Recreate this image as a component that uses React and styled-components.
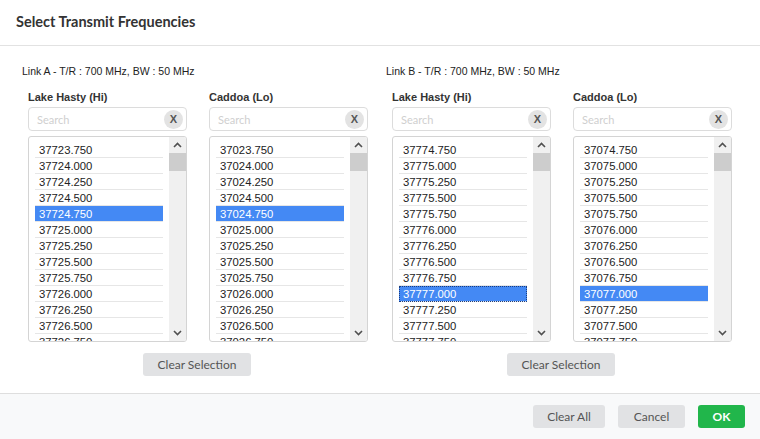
import React from 'react'
import styled, { createGlobalStyle } from 'styled-components'

const GlobalStyle = createGlobalStyle`
  html, body { margin: 0; padding: 0; background: #fff; }
  * { box-sizing: border-box; }
`

const makeList = (start, count) => {
  const out = []
  for (let i = 0; i < count; i++) out.push((start + i * 0.25).toFixed(3))
  return out
}

const links = [
  {
    label: 'Link A - T/R : 700 MHz, BW : 50 MHz',
    cols: [
      { title: 'Lake Hasty (Hi)', items: makeList(37723.75, 13), selected: 4 },
      { title: 'Caddoa (Lo)', items: makeList(37023.75, 13), selected: 4 },
    ],
  },
  {
    label: 'Link B - T/R : 700 MHz, BW : 50 MHz',
    cols: [
      { title: 'Lake Hasty (Hi)', items: makeList(37774.75, 13), selected: 9, focused: true },
      { title: 'Caddoa (Lo)', items: makeList(37074.75, 13), selected: 9 },
    ],
  },
]

function Chevron({ up }) {
  return (
    <svg width="9" height="6" viewBox="0 0 9 6">
      <polyline
        points={up ? '1,5 4.5,1.5 8,5' : '1,1 4.5,4.5 8,1'}
        fill="none"
        stroke="#505050"
        strokeWidth="1.6"
      />
    </svg>
  )
}

function FreqColumn({ col }) {
  return (
    <Column>
      <ColTitle>{col.title}</ColTitle>
      <SearchBox>
        <SearchInput placeholder="Search" />
        <ClearX>X</ClearX>
      </SearchBox>
      <ListBox>
        <Rows>
          {col.items.map((v, i) => (
            <Row key={v} $selected={i === col.selected} $focused={i === col.selected && col.focused}>
              {v}
            </Row>
          ))}
        </Rows>
        <ScrollBar>
          <Arrow><Chevron up /></Arrow>
          <Thumb />
          <Track />
          <Arrow><Chevron /></Arrow>
        </ScrollBar>
      </ListBox>
    </Column>
  )
}

export default function App() {
  return (
    <Dialog>
      <GlobalStyle />
      <Header>Select Transmit Frequencies</Header>
      <Body>
        {links.map((link) => (
          <LinkGroup key={link.label}>
            <LinkLabel>{link.label}</LinkLabel>
            <Columns>
              {link.cols.map((c) => (
                <FreqColumn key={c.title} col={c} />
              ))}
            </Columns>
            <GreyButton $w={108}>Clear Selection</GreyButton>
          </LinkGroup>
        ))}
      </Body>
      <Footer>
        <GreyButton $w={72}>Clear All</GreyButton>
        <GreyButton $w={67}>Cancel</GreyButton>
        <OkButton>OK</OkButton>
      </Footer>
    </Dialog>
  )
}

const Dialog = styled.div`
  width: 760px;
  height: 439px;
  background: #fff;
  display: flex;
  flex-direction: column;
  overflow: hidden;
`
const Header = styled.div`
  height: 46px;
  border-bottom: 1px solid #e2e2e2;
  padding: 0 16px;
  display: flex;
  align-items: center;
  padding-bottom: 2px;
  font-family: Lato, 'Open Sans', sans-serif;
  font-weight: 700;
  font-size: 14.5px;
  color: #333;
`
const Body = styled.div`
  flex: 1;
  display: flex;
  padding: 18px 0 0 22px;
`
const LinkGroup = styled.div`
  width: 364px;
  display: flex;
  flex-direction: column;
`
const LinkLabel = styled.div`
  font-family: 'Liberation Sans', Arial, sans-serif;
  font-size: 10.5px;
  color: #222;
  height: 14px;
  line-height: 14px;
`
const Columns = styled.div`
  display: flex;
  gap: 22px;
  padding-left: 6px;
  margin-top: 12px;
`
const Column = styled.div`
  width: 159px;
  display: flex;
  flex-direction: column;
`
const ColTitle = styled.div`
  font-family: 'Liberation Sans', Arial, sans-serif;
  font-weight: 700;
  font-size: 11px;
  color: #333;
  height: 14px;
  line-height: 14px;
  margin-bottom: 3px;
`
const SearchBox = styled.div`
  height: 24px;
  border: 1px solid #dcdcdc;
  border-radius: 4px;
  display: flex;
  align-items: center;
  padding: 0 3px 0 6px;
`
const SearchInput = styled.input`
  flex: 1;
  min-width: 0;
  border: none;
  outline: none;
  font-family: Lato, 'Open Sans', sans-serif;
  font-size: 11px;
  color: #333;
  background: transparent;
  &::placeholder { color: #cfcfcf; }
`
const ClearX = styled.div`
  width: 19px;
  height: 19px;
  border-radius: 50%;
  background: #e3e3e3;
  display: flex;
  align-items: center;
  justify-content: center;
  font-family: 'Liberation Sans', Arial, sans-serif;
  font-weight: 700;
  font-size: 11px;
  color: #555;
`
const ListBox = styled.div`
  margin-top: 5px;
  height: 206px;
  border: 1px solid #d4d4d4;
  border-radius: 3px;
  display: flex;
  overflow: hidden;
`
const Rows = styled.div`
  flex: 1;
  padding: 5px 6px 0 6px;
  overflow: hidden;
`
const Row = styled.div`
  height: 16px;
  line-height: 14px;
  padding: 1px 0 0 4px;
  border-bottom: 1px solid #e6e6e6;
  font-family: 'Liberation Sans', Arial, sans-serif;
  font-size: 11.3px;
  color: ${(p) => (p.$selected ? '#fff' : '#222')};
  background: ${(p) => (p.$selected ? '#4489f4' : 'transparent')};
  outline: ${(p) => (p.$focused ? '1px dotted #1a3d80' : 'none')};
  outline-offset: -1px;
`
const ScrollBar = styled.div`
  width: 17px;
  background: #f0f0f0;
  display: flex;
  flex-direction: column;
`
const Arrow = styled.div`
  height: 16px;
  display: flex;
  align-items: center;
  justify-content: center;
`
const Thumb = styled.div`
  height: 18px;
  background: #cdcdcd;
`
const Track = styled.div`
  flex: 1;
`
const GreyButton = styled.button`
  width: ${(p) => p.$w}px;
  height: 23px;
  border: none;
  border-radius: 3px;
  background: #e1e2e4;
  color: #555;
  font-family: Lato, 'Open Sans', sans-serif;
  font-size: 12px;
  padding: 0;
  align-self: center;
  ${LinkGroup} & {
    margin-top: 11px;
    margin-left: -14px;
  }
`
const OkButton = styled.button`
  width: 47px;
  height: 23px;
  border: none;
  border-radius: 3px;
  background: #21b64b;
  color: #fff;
  font-family: Lato, 'Open Sans', sans-serif;
  font-weight: 700;
  font-size: 12px;
  padding: 0;
`
const Footer = styled.div`
  height: 46px;
  border-top: 1px solid #dedede;
  background: #f8f9fa;
  display: flex;
  align-items: center;
  justify-content: flex-end;
  gap: 13px;
  padding: 0 15px 1px 0;
`
